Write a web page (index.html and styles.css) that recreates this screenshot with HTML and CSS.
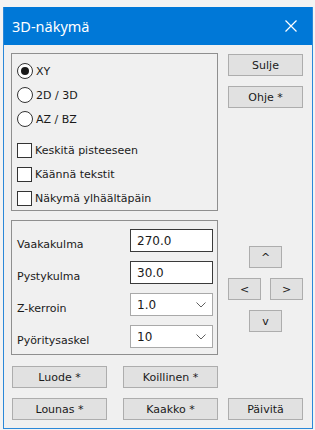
FILE: index.html
```html
<!DOCTYPE html>
<html lang="fi">
<head>
    <meta charset="UTF-8">
    <title>3D-näkymä</title>
    <link rel="stylesheet" href="styles.css">
</head>
<body>

    <div class="window">
        <!-- Title bar -->
        <div class="titlebar">
            <span class="title">3D-näkymä</span>
            <svg class="close" width="12" height="12" viewBox="0 0 12 12">
                <path d="M0.5 0.5 L11.5 11.5 M11.5 0.5 L0.5 11.5" stroke="#fff" stroke-width="1.2" fill="none"/>
            </svg>
        </div>

        <div class="content">
            <!-- View options -->
            <div class="groupbox options">
                <div class="option"><span class="radio checked"></span>XY</div>
                <div class="option"><span class="radio"></span>2D / 3D</div>
                <div class="option"><span class="radio"></span>AZ / BZ</div>
                <div class="option spaced"><span class="check"></span>Keskitä pisteeseen</div>
                <div class="option"><span class="check"></span>Käännä tekstit</div>
                <div class="option"><span class="check"></span>Näkymä ylhäältäpäin</div>
            </div>

            <div class="side-buttons">
                <button class="btn">Sulje</button>
                <button class="btn">Ohje *</button>
            </div>

            <!-- Angles -->
            <div class="groupbox fields">
                <span class="field-label">Vaakakulma</span>
                <div class="textbox">270.0</div>
                <span class="field-label">Pystykulma</span>
                <div class="textbox">30.0</div>
                <span class="field-label">Z-kerroin</span>
                <div class="combo">1.0
                    <svg width="10" height="6" viewBox="0 0 10 6"><polyline points="0.5,0.5 5,5 9.5,0.5" stroke="#606060" fill="none"/></svg>
                </div>
                <span class="field-label">Pyöritysaskel</span>
                <div class="combo">10
                    <svg width="10" height="6" viewBox="0 0 10 6"><polyline points="0.5,0.5 5,5 9.5,0.5" stroke="#606060" fill="none"/></svg>
                </div>
            </div>

            <div class="arrow-pad">
                <button class="btn arrow">^</button>
                <div class="arrow-row">
                    <button class="btn arrow">&lt;</button>
                    <button class="btn arrow">&gt;</button>
                </div>
                <button class="btn arrow">v</button>
            </div>
        </div>

        <!-- Directions -->
        <div class="bottom-buttons">
            <button class="btn">Luode *</button>
            <button class="btn">Koillinen *</button>
            <span></span>
            <button class="btn">Lounas *</button>
            <button class="btn">Kaakko *</button>
            <button class="btn small">Päivitä</button>
        </div>
    </div>

</body>
</html>
```

FILE: styles.css
```css
/* Reset */
* {
    margin: 0;
    padding: 0;
    box-sizing: border-box;
}

body {
    background-color: #f3f3f3;
    font-family: 'DejaVu Sans', sans-serif;
    font-size: 11px;
    color: #1a1a1a;
    width: 315px;
    height: 430px;
    overflow: hidden;
}

.window {
    margin: 7px 0 0 3px;
    width: 310px;
    height: 422px;
    border: 1px solid #2b88d8;
    border-top: none;
    background-color: #f0f0f0;
}

/* Title bar */
.titlebar {
    height: 38px;
    background-color: #0078d7;
    display: flex;
    align-items: center;
    justify-content: space-between;
    padding: 0 15px 0 8px;
}

.title {
    font-family: 'Noto Sans', sans-serif;
    font-size: 14.5px;
    color: #fff;
}

/* Main area */
.content {
    display: grid;
    grid-template-columns: 207px 75px;
    column-gap: 10px;
    row-gap: 9px;
    padding: 8px 0 0 7px;
}

.groupbox {
    border: 1px solid #8f8f8f;
}

.options {
    height: 158px;
    padding: 9px 0 0 5px;
    display: flex;
    flex-direction: column;
    gap: 8px;
}

.option {
    display: flex;
    align-items: center;
    height: 16px;
    gap: 3px;
}

.option.spaced {
    margin-top: 7px;
}

.radio {
    width: 16px;
    height: 16px;
    border: 1px solid #333;
    border-radius: 50%;
    background-color: #fff;
    display: flex;
    align-items: center;
    justify-content: center;
}

.radio.checked::after {
    content: "";
    width: 8px;
    height: 8px;
    border-radius: 50%;
    background-color: #1a1a1a;
}

.check {
    width: 15px;
    height: 15px;
    border: 1px solid #333;
    background-color: #fff;
}

.side-buttons {
    display: flex;
    flex-direction: column;
    gap: 10px;
    padding-top: 1px;
}

/* Buttons */
.btn {
    height: 22px;
    background-color: #e1e1e1;
    border: 1px solid #adadad;
    font-family: 'DejaVu Sans', sans-serif;
    font-size: 11px;
    color: #1a1a1a;
}

.fields {
    height: 135px;
    padding: 8px 4px 0 5px;
    display: grid;
    grid-template-columns: 1fr 83px;
    grid-auto-rows: 23px;
    row-gap: 9px;
}

.field-label {
    align-self: end;
    line-height: 14px;
}

.textbox, .combo {
    background-color: #fff;
    font-size: 12px;
    padding: 0 6px;
    display: flex;
    align-items: center;
}

.textbox {
    border: 1px solid #3a3a3a;
}

.combo {
    border: 1px solid #a9a9a9;
    justify-content: space-between;
}

.arrow-pad {
    padding-top: 26px;
    display: flex;
    flex-direction: column;
    align-items: center;
    gap: 10px;
}

.arrow-row {
    width: 100%;
    display: flex;
    justify-content: space-between;
}

.arrow {
    width: 33px;
}

.bottom-buttons {
    display: grid;
    grid-template-columns: 111px 105px 75px;
    row-gap: 10px;
    padding: 11px 0 0 8px;
}

.bottom-buttons .btn {
    width: 95px;
}

.bottom-buttons .btn.small {
    width: 75px;
}
```
